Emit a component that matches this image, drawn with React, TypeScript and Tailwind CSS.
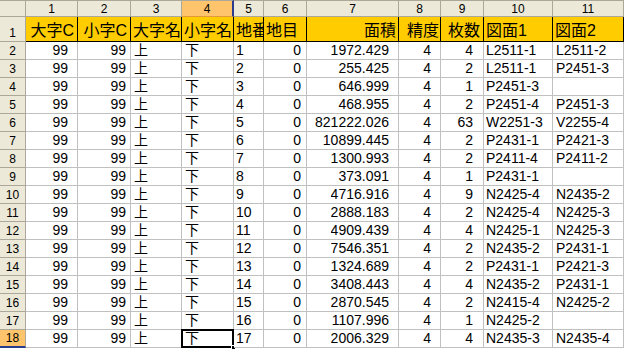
import React from "react";

const rows: string[][] = [
  ["1", "0", "1972.429", "4", "4", "L2511-1", "L2511-2"],
  ["2", "0", "255.425", "4", "2", "L2511-1", "P2451-3"],
  ["3", "0", "646.999", "4", "1", "P2451-3", ""],
  ["4", "0", "468.955", "4", "2", "P2451-4", "P2451-3"],
  ["5", "0", "821222.026", "4", "63", "W2251-3", "V2255-4"],
  ["6", "0", "10899.445", "4", "2", "P2431-1", "P2421-3"],
  ["7", "0", "1300.993", "4", "2", "P2411-4", "P2411-2"],
  ["8", "0", "373.091", "4", "1", "P2431-1", ""],
  ["9", "0", "4716.916", "4", "9", "N2425-4", "N2435-2"],
  ["10", "0", "2888.183", "4", "2", "N2425-4", "N2425-3"],
  ["11", "0", "4909.439", "4", "4", "N2425-1", "N2425-3"],
  ["12", "0", "7546.351", "4", "2", "N2435-2", "P2431-1"],
  ["13", "0", "1324.689", "4", "2", "P2431-1", "P2421-3"],
  ["14", "0", "3408.443", "4", "4", "N2435-2", "P2431-1"],
  ["15", "0", "2870.545", "4", "2", "N2415-4", "N2425-2"],
  ["16", "0", "1107.996", "4", "1", "N2425-2", ""],
  ["17", "0", "2006.329", "4", "4", "N2435-3", "N2435-4"],
];

const titles = ["大字C", "小字C", "大字名", "小字名", "地番", "地目", "面積", "精度", "枚数", "図面1", "図面2"];

const titlePad = [
  "justify-end pr-[3px]",
  "justify-end pr-[3px]",
  "justify-start pl-[2px]",
  "justify-start pl-[2px]",
  "justify-start pl-[2px]",
  "justify-start pl-[2px]",
  "justify-end pr-[2px]",
  "justify-end pr-[1px]",
  "justify-end pr-[3px]",
  "justify-start pl-[2px]",
  "justify-start pl-[2px]",
];

const dataPad = [
  "justify-end pr-[9px]",
  "justify-end pr-[4px]",
  "justify-start pl-[3px]",
  "justify-start pl-[3px]",
  "justify-start pl-[2px]",
  "justify-end pr-[5px]",
  "justify-end pr-[9px]",
  "justify-end pr-[9px]",
  "justify-end pr-[10px]",
  "justify-start pl-[2px]",
  "justify-start pl-[3px]",
];

export default function App() {
  const cells: React.ReactNode[] = [];

  // column header row
  cells.push(
    <div key="corner" className="bg-[#ece9d8] border-t border-r border-b border-[#aca899]" />
  );
  for (let c = 1; c <= 11; c++) {
    const sel = c === 4;
    cells.push(
      <div
        key={"h" + c}
        className={
          sel
            ? "bg-[#ffc46c] border-t border-[#aca899] border-b border-b-[#e09a3a] border-r-2 border-r-[#2a3c8f] flex items-center justify-center text-[12px] leading-none text-black"
            : "bg-[#ece9d8] border-t border-r border-b border-[#aca899] flex items-center justify-center text-[12px] leading-none text-black"
        }
      >
        {c}
      </div>
    );
  }

  // row 1 (titles)
  cells.push(
    <div
      key="r1h"
      className="bg-[#ece9d8] border-r border-b border-[#aca899] flex items-end justify-center pb-[2px] text-[12px] leading-none text-black"
    >
      1
    </div>
  );
  titles.forEach((t, i) => {
    cells.push(
      <div
        key={"t" + i}
        className={
          "bg-[#ffcc00] border-r border-b border-black flex items-end overflow-hidden whitespace-nowrap text-[16px] leading-[20px] text-black " +
          titlePad[i]
        }
      >
        {t}
      </div>
    );
  });

  rows.forEach((r, ri) => {
    const rowNum = ri + 2;
    const selRow = rowNum === 18;
    cells.push(
      <div
        key={"rh" + rowNum}
        className={
          selRow
            ? "bg-[#ffc46c] border-r border-r-[#aca899] border-b-2 border-b-[#2a3c8f] flex items-center justify-center text-[12px] leading-none text-black"
            : "bg-[#ece9d8] border-r border-b border-[#aca899] flex items-center justify-center text-[12px] leading-none text-black"
        }
      >
        {rowNum}
      </div>
    );
    const vals = ["99", "99", "上", "下", ...r];
    vals.forEach((v, ci) => {
      const isSel = selRow && ci === 3;
      cells.push(
        <div
          key={"c" + rowNum + "-" + ci}
          className={
            "relative bg-white border-r border-b border-[#c0c0c0] flex items-center whitespace-nowrap text-[14px] leading-[17px] text-black " +
            dataPad[ci]
          }
        >
          <span className="overflow-hidden">{v}</span>
          {isSel && (
            <>
              <div className="absolute -left-px -top-px -right-px -bottom-px border-2 border-black" />
              <div className="absolute -right-[3px] -bottom-[3px] w-[5px] h-[5px] bg-black border border-white" />
            </>
          )}
        </div>
      );
    });
  });

  return (
    <div className="w-[624px] h-[349px] bg-white overflow-hidden font-['Liberation_Sans','Noto_Sans_CJK_JP',sans-serif]">
      <div className="grid grid-cols-[26px_52px_53px_51px_52px_30px_43px_92px_42px_43px_69px_71px] grid-rows-[17px_25px_repeat(17,18px)]">
        {cells}
      </div>
    </div>
  );
}
